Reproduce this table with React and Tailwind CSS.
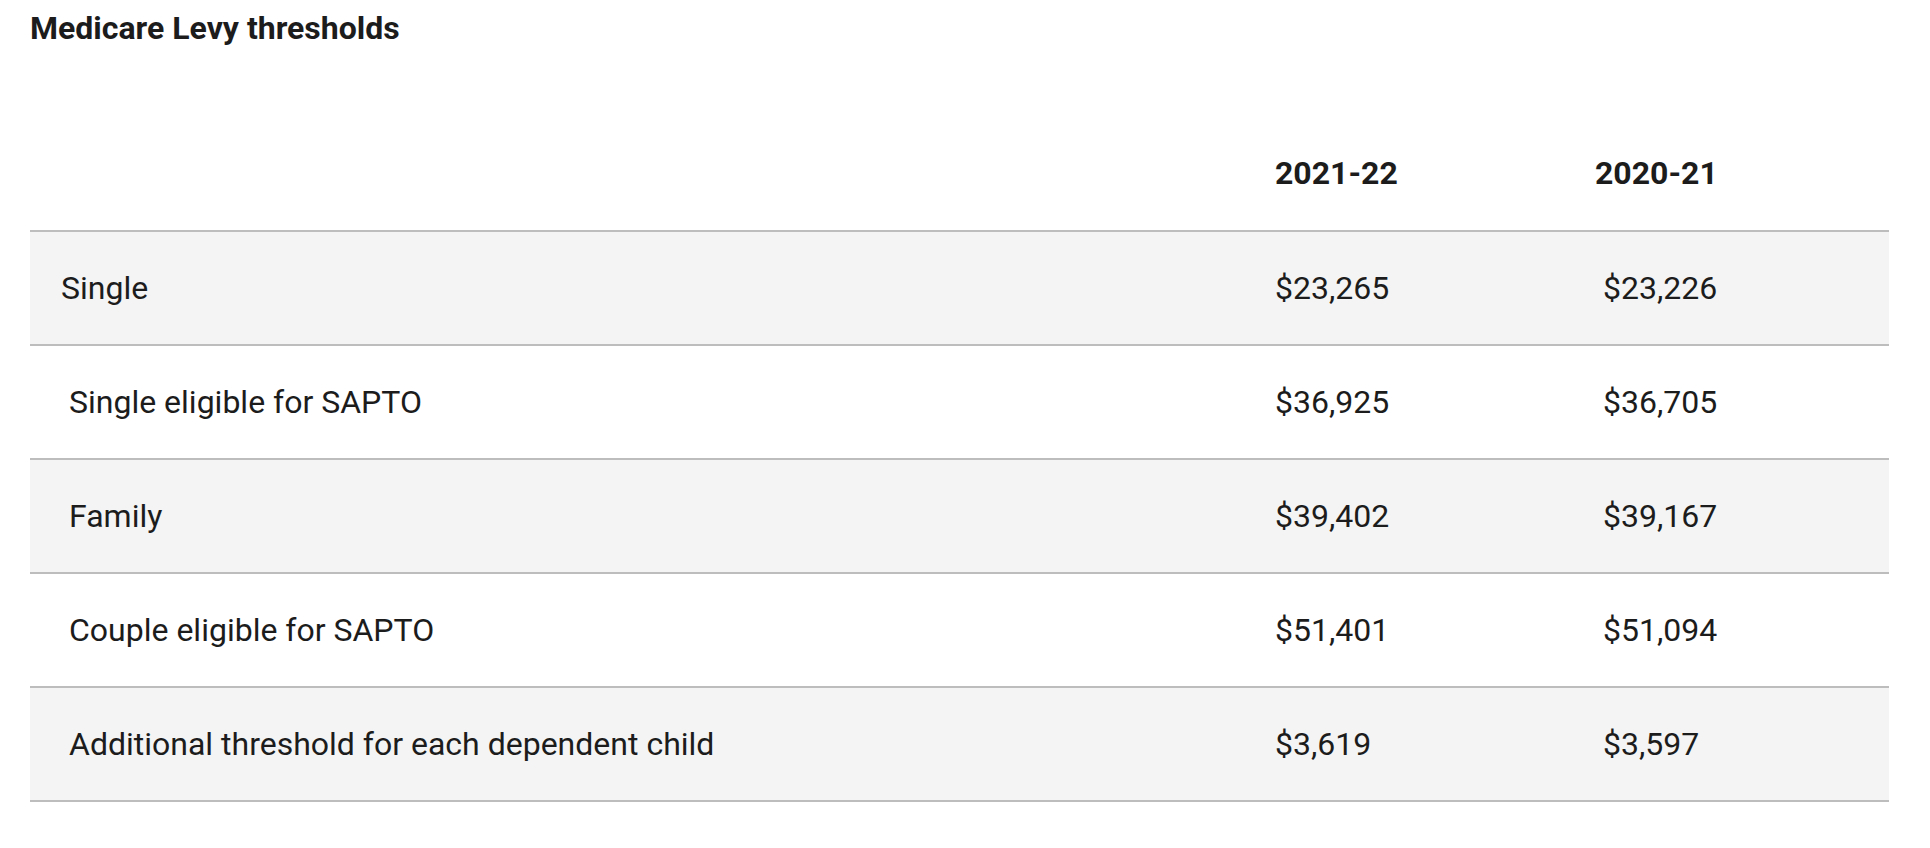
export default function App() {
  const rows = [
    { label: "Single", a: "$23,265", b: "$23,226", shade: true, tight: true },
    { label: "Single eligible for SAPTO", a: "$36,925", b: "$36,705" },
    { label: "Family", a: "$39,402", b: "$39,167", shade: true },
    { label: "Couple eligible for SAPTO", a: "$51,401", b: "$51,094" },
    { label: "Additional threshold for each dependent child", a: "$3,619", b: "$3,597", shade: true },
  ];

  return (
    <div className="min-h-screen bg-white pl-[30px] pr-[41px] pt-[8px] text-[#1c1c1c]" style={{ fontFamily: "Roboto, 'Liberation Sans', sans-serif" }}>
      <h2 className="text-[32px] leading-[40px] font-bold">Medicare Levy thresholds</h2>

      <table className="mt-[67px] w-full border-collapse text-[32px]">
        <thead>
          <tr className="h-[116px] border-b-2 border-[#bdbdbd]">
            <th className="w-[1213px]"></th>
            <th className="w-[320px] pl-[32px] text-left font-bold">2021-22</th>
            <th className="pl-[32px] text-left font-bold">2020-21</th>
          </tr>
        </thead>
        <tbody>
          {rows.map((r) => (
            <tr key={r.label} className={`h-[114px] border-b-2 border-[#bdbdbd] ${r.shade ? "bg-[#f4f4f4]" : "bg-white"}`}>
              <td className={r.tight ? "pl-[31px]" : "pl-[39px]"}>{r.label}</td>
              <td className="pl-[32px]">{r.a}</td>
              <td className="pl-[40px]">{r.b}</td>
            </tr>
          ))}
        </tbody>
      </table>
    </div>
  );
}
